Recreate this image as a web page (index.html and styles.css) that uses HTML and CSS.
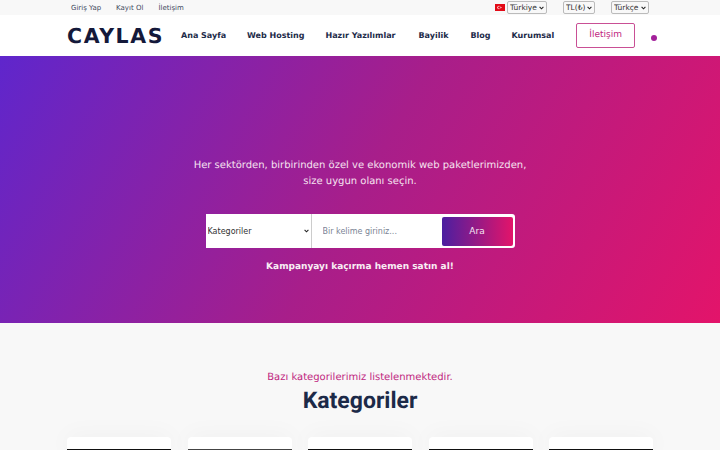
FILE: index.html
```html
<!DOCTYPE html>
<html>
<head>
	<title>Caylas</title>
	<link rel="stylesheet" href="styles.css">
</head>
<body>
	<div class="topbar">
		<div class="container topbar-inner">
			<div class="top-links">
				<a>Giriş Yap</a>
				<a>Kayıt Ol</a>
				<a>İletişim</a>
			</div>
			<div class="top-selects">
				<svg class="flag" viewBox="0 0 10 7">
					<rect width="10" height="7" fill="#e30a17"/>
					<circle cx="4" cy="3.5" r="1.7" fill="#fff"/>
					<circle cx="4.4" cy="3.5" r="1.35" fill="#e30a17"/>
					<circle cx="6" cy="3.5" r="0.6" fill="#fff"/>
				</svg>
				<select class="country"><option>Türkiye</option></select>
				<select class="currency"><option>TL(₺)</option></select>
				<select class="language"><option>Türkçe</option></select>
			</div>
		</div>
	</div>

	<div class="navbar">
		<div class="container navbar-inner">
			<a class="logo">CAYLAS</a>
			<div class="nav-links">
				<a class="home">Ana Sayfa</a>
				<a class="hosting">Web Hosting</a>
				<a class="scripts">Hazır Yazılımlar</a>
				<a class="reseller">Bayilik</a>
				<a class="blog">Blog</a>
				<a class="corporate">Kurumsal</a>
			</div>
			<a class="contact-btn">İletişim</a>
			<span class="cart-count"></span>
		</div>
	</div>

	<div class="hero">
		<p class="hero-text">Her sektörden, birbirinden özel ve ekonomik web paketlerimizden,<br>size uygun olanı seçin.</p>
		<div class="search-box">
			<select class="search-category"><option>Kategoriler</option></select>
			<div class="search-right">
				<input type="text" class="search-input" placeholder="Bir kelime giriniz...">
				<button class="search-btn">Ara</button>
			</div>
		</div>
		<p class="hero-note">Kampanyayı kaçırma hemen satın al!</p>
	</div>

	<div class="categories">
		<p class="cat-sub">Bazı kategorilerimiz listelenmektedir.</p>
		<h2 class="cat-title">Kategoriler</h2>
		<div class="container cat-grid">
			<div class="cat-card"><div class="cat-img"></div></div>
			<div class="cat-card"><div class="cat-img grey"></div></div>
			<div class="cat-card"><div class="cat-img"></div></div>
			<div class="cat-card"><div class="cat-img"></div></div>
			<div class="cat-card"><div class="cat-img"></div></div>
		</div>
	</div>
</body>
</html>
```

FILE: styles.css
```css
* {
	box-sizing: border-box;
}

html, body {
	height: 450px;
	overflow: hidden;
}

body {
	margin: 0;
	font-family: "DejaVu Sans", sans-serif;
	text-rendering: geometricPrecision;
	background-color: #f8f8f8;
}

.container {
	width: 586px;
	margin: 0 auto;
}

.topbar {
	height: 15px;
	background-color: #f8f8f8;
}

.topbar-inner {
	display: flex;
	justify-content: space-between;
	align-items: center;
	height: 15px;
	padding: 0 4px;
}

.top-links {
	display: flex;
	gap: 15px;
	font-size: 7px;
	color: #3f4a5e;
}

.top-selects {
	display: flex;
	align-items: center;
}

.flag {
	width: 10px;
	height: 7px;
	margin-right: 2px;
}

.top-selects select {
	appearance: none;
	height: 13px;
	padding: 0 0 0 2px;
	font-family: "DejaVu Sans", sans-serif;
	font-size: 7.5px;
	color: #333;
	background: #f8f8f8 url("data:image/svg+xml,%3Csvg xmlns='http://www.w3.org/2000/svg' viewBox='0 0 6 4'%3E%3Cpath d='M.7.7L3 3 5.300.7' fill='none' stroke='%23222' stroke-width='1.300'/%3E%3C/svg%3E") no-repeat right 2px center / 5px 4px;
	border: 1px solid #bbb;
	border-radius: 2px;
}

.country {
	width: 40px;
}

.currency {
	width: 32px;
	margin-left: 16px;
}

.language {
	width: 38px;
	margin-left: 16px;
}

.navbar {
	height: 41px;
	background-color: #fff;
}

.navbar-inner {
	display: flex;
	align-items: center;
	height: 41px;
}

.logo {
	width: 96px;
	flex: none;
	font-size: 20.5px;
	line-height: 24px;
	font-weight: 700;
	letter-spacing: 1.6px;
	white-space: nowrap;
	color: #14193a;
}

.nav-links {
	display: flex;
	margin-left: 18px;
	font-size: 8px;
	font-weight: 700;
	white-space: nowrap;
	color: #1c2a48;
}

.hosting {
	margin-left: 21px;
}

.scripts {
	margin-left: 21px;
}

.reseller {
	margin-left: 23px;
}

.blog {
	margin-left: 22px;
}

.corporate {
	margin-left: 21px;
}

.contact-btn {
	flex: none;
	width: 59px;
	height: 25px;
	margin-left: 22px;
	line-height: 23px;
	text-align: center;
	font-size: 9px;
	color: #c0267f;
	border: 1px solid #c94f95;
	border-radius: 2px;
}

.cart-count {
	flex: none;
	width: 6px;
	height: 6px;
	margin: 4px 0 0 16px;
	border-radius: 50%;
	background-color: #a3209a;
}

.hero {
	height: 267px;
	padding-top: 102px;
	text-align: center;
	background: linear-gradient(120deg, #5f26cc 0%, #a81e8a 50%, #e3146a 100%);
}

.hero-text {
	margin: 0;
	font-size: 10px;
	line-height: 16px;
	color: #f6e3f0;
}

.search-box {
	display: flex;
	width: 309px;
	height: 34px;
	margin: 24px auto 0;
}

.search-category {
	appearance: none;
	flex: none;
	width: 106px;
	height: 34px;
	padding: 0 0 0 2px;
	font-family: "DejaVu Sans", sans-serif;
	font-size: 8px;
	color: #333;
	background: #fff url("data:image/svg+xml,%3Csvg xmlns='http://www.w3.org/2000/svg' viewBox='0 0 6 4'%3E%3Cpath d='M.7.7L3 3 5.300.7' fill='none' stroke='%23222' stroke-width='1.300'/%3E%3C/svg%3E") no-repeat right 2px center / 5px 4px;
	border: 0;
	border-right: 1px solid #ccc;
	border-radius: 0;
}

.search-right {
	display: flex;
	align-items: center;
	flex: 1;
	padding: 0 2px;
	background-color: #fff;
	border-radius: 0 3px 3px 0;
}

.search-input {
	flex: 1;
	min-width: 0;
	height: 28px;
	padding: 0 9px;
	font-family: "DejaVu Sans", sans-serif;
	font-size: 8px;
	border: 0;
	outline: 0;
}

.search-input::placeholder {
	color: #7b8494;
}

.search-btn {
	flex: none;
	width: 71px;
	height: 29px;
	font-family: "DejaVu Sans", sans-serif;
	font-size: 9px;
	color: #f6e3f0;
	background: linear-gradient(90deg, #4b1fa0, #e3146a);
	border: 0;
	border-radius: 2px;
}

.hero-note {
	margin: 14px 0 0;
	font-size: 9px;
	font-weight: 700;
	color: #f8edf4;
}

.categories {
	padding-top: 48px;
	text-align: center;
}

.cat-sub {
	margin: 0;
	font-size: 10px;
	line-height: 14px;
	color: #c0267f;
}

.cat-title {
	margin: 1px 0 0;
	font-family: Roboto, sans-serif;
	font-size: 23px;
	line-height: 30px;
	font-weight: 700;
	color: #1c2a48;
}

.cat-grid {
	display: grid;
	grid-template-columns: repeat(5, 104px);
	justify-content: space-between;
	margin-top: 21px;
}

.cat-card {
	height: 13px;
	padding-top: 12px;
	background-color: #fff;
	border-radius: 4px 4px 0 0;
	box-shadow: 0 0 24px rgba(0, 0, 0, 0.05);
}

.cat-img {
	height: 1px;
	background-color: #111;
}

.cat-img.grey {
	background-color: #444;
}
```
